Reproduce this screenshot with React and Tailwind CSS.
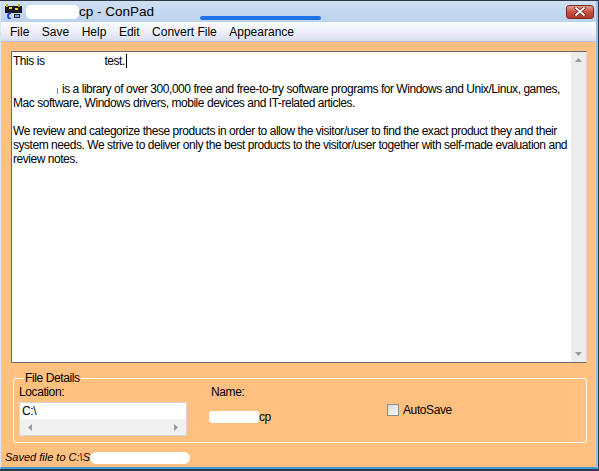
import React from "react";

const font = { fontFamily: '"Liberation Sans", Arial, sans-serif' };

const AppIcon = () => (
  <svg width="17" height="15" viewBox="0 0 17 15" className="block">
    <rect x="0" y="2" width="17" height="7" fill="#1a1a1a" />
    <rect x="1" y="0" width="2" height="3" fill="#c8b400" />
    <rect x="13" y="0" width="2" height="3" fill="#c8b400" />
    <rect x="4" y="3" width="3" height="2" fill="#e8d800" />
    <rect x="10" y="4" width="3" height="2" fill="#e8d800" />
    <path d="M6 9 A3 3 0 1 0 6 15" stroke="#1f3fd0" strokeWidth="1.8" fill="none" />
    <rect x="9" y="10" width="6" height="4" fill="#2a2a2a" />
    <rect x="10" y="11" width="4" height="2" fill="#8aa0ff" />
  </svg>
);

const CloseButton = () => (
  <div className="w-[28px] h-[14px] rounded-[3px] border border-[#7a2a22] bg-linear-to-b from-[#e39a8e] via-[#c9503f] to-[#b23a2a] flex items-center justify-center">
    <svg width="12" height="9" viewBox="0 0 12 9">
      <path d="M2 1 L10 8 M10 1 L2 8" stroke="#5a1a12" strokeWidth="3.2" strokeLinecap="round" />
      <path d="M2 1 L10 8 M10 1 L2 8" stroke="#ffffff" strokeWidth="1.8" strokeLinecap="round" />
    </svg>
  </div>
);

const menu = ["File", "Save", "Help", "Edit", "Convert File", "Appearance"];

const Arrow = ({ dir }) => {
  const d = {
    up: "M0 4 L3.5 0 L7 4 Z",
    down: "M0 0 L7 0 L3.5 4 Z",
    left: "M4 0 L4 7 L0 3.5 Z",
    right: "M0 0 L4 3.5 L0 7 Z",
  }[dir];
  const vert = dir === "up" || dir === "down";
  return (
    <svg width={vert ? 7 : 4} height={vert ? 4 : 7} viewBox={vert ? "0 0 7 4" : "0 0 4 7"}>
      <path d={d} fill="#9a9a9a" />
    </svg>
  );
};

export default function App() {
  return (
    <div
      className="w-[599px] h-[471px] border-t border-r border-b-2 border-[#2f3a46] overflow-hidden"
      style={font}
    >
      <div className="h-full flex flex-col border-r-2 border-b-2 border-l border-l-[#dce7f5] border-r-[#8fc3ea] border-b-[#3c9ad8] bg-[#ffc080]">
        {/* title bar */}
        <div className="relative h-[21px] shrink-0 flex items-center pl-[4px] pr-[2px] bg-linear-to-b from-[#cfe0f2] to-[#bcd2eb]">
          <AppIcon />
          <span className="ml-[4px] w-[53px] h-[14px] bg-white rounded-[5px]" />
          <span className="text-[13.5px] text-black leading-none">cp - ConPad</span>
          <div className="ml-auto">
            <CloseButton />
          </div>
          <span className="absolute left-[199px] top-[15px] w-[121px] h-[4px] rounded-full bg-[#1e74e6]" />
        </div>

        {/* menu bar */}
        <div className="h-[20px] shrink-0 flex items-center gap-[12.5px] pl-[9px] text-[12px] text-black bg-linear-to-b from-[#fbfcfe] via-[#eef0f9] to-[#d9def1] border-b border-[#b7bfdc]">
          {menu.map((m) => (
            <span key={m}>{m}</span>
          ))}
        </div>

        {/* editor */}
        <div className="ml-[10px] mt-[9px] w-[576px] h-[312px] shrink-0 flex border border-[#6b6b6b] border-r-[#d8d8d8] bg-white">
          <div className="flex-1 min-w-0 overflow-hidden pl-[1px] pt-[2px] text-[12px] leading-[14px] tracking-[-0.46px] text-black whitespace-nowrap">
            <div className="flex items-start">
              <span>This is</span>
              <span className="inline-block w-[60px]" />
              <span>test.</span>
              <span className="inline-block w-[1px] h-[14px] bg-black ml-[1px]" />
            </div>
            <div>&nbsp;</div>
            <div className="flex items-center">
              <span className="inline-block w-[44px]" />
              <span className="inline-block w-[1px] h-[6px] bg-[#4b8fe0] mt-[3px]" />
              <span className="inline-block w-[4px]" />
              <span>is a library of over 300,000 free and free-to-try software programs for Windows and Unix/Linux, games,</span>
            </div>
            <div>Mac software, Windows drivers, mobile devices and IT-related articles.</div>
            <div>&nbsp;</div>
            <div>We review and categorize these products in order to allow the visitor/user to find the exact product they and their</div>
            <div>system needs. We strive to deliver only the best products to the visitor/user together with self-made evaluation and</div>
            <div>review notes.</div>
          </div>
          <div className="w-[15px] shrink-0 bg-[#ececec] flex flex-col items-center justify-between py-[6px]">
            <Arrow dir="up" />
            <Arrow dir="down" />
          </div>
        </div>

        {/* file details */}
        <fieldset className="ml-[12px] mt-[8px] w-[574px] h-[72px] shrink-0 border border-white rounded-[3px] pl-[5px] text-[12px] leading-[14px] tracking-[-0.4px] text-black">
          <legend className="ml-[5px] px-[1px]">File Details</legend>
          <div className="flex">
            <div className="w-[168px] flex flex-col">
              <span>Location:</span>
              <div className="mt-[3px] h-[34px] border border-[#d6d6d6] bg-white flex flex-col">
                <div className="h-[16px] pl-[2px] pt-[1px]">C:\</div>
                <div className="flex-1 bg-[#f0f0f0] flex items-center justify-between px-[8px]">
                  <Arrow dir="left" />
                  <Arrow dir="right" />
                </div>
              </div>
            </div>
            <div className="ml-[24px] w-[176px] flex flex-col">
              <span>Name:</span>
              <div className="mt-[11px] flex items-center">
                <span className="ml-[-2px] w-[50px] h-[12px] bg-white rounded-[3px]" />
                <span>cp</span>
              </div>
            </div>
            <div className="pt-[19px] flex items-start">
              <span className="w-[12px] h-[12px] border border-[#8a8a8a] bg-linear-to-br from-[#d8d8d8] to-[#f8f8f8]" />
              <span className="ml-[4px] leading-[12px]">AutoSave</span>
            </div>
          </div>
        </fieldset>

        {/* status */}
        <div className="mt-[8px] pl-[4px] flex items-center text-[11px] leading-[13px] italic text-black">
          <span>Saved file to C:\S</span>
          <span className="w-[100px] h-[12px] bg-white rounded-[6px]" />
        </div>
      </div>
    </div>
  );
}
